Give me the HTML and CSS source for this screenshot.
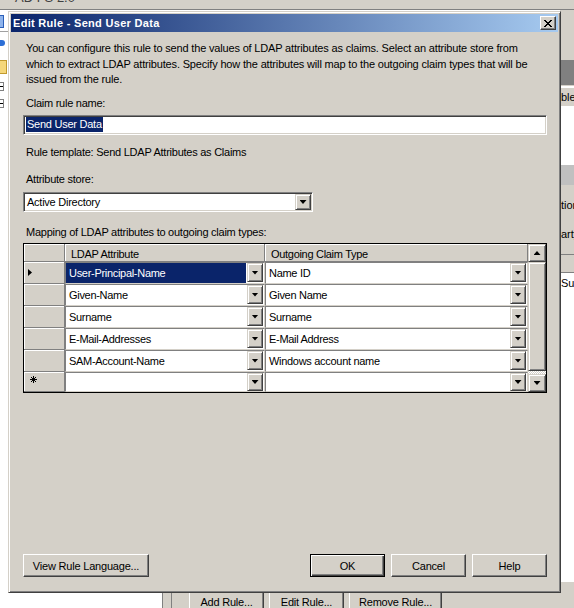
FILE: index.html
```html
<!DOCTYPE html>
<html lang="en">
<head>
    <meta charset="UTF-8">
    <title>Edit Rule - Send User Data</title>
    <link rel="stylesheet" href="styles.css">
</head>
<body>
<div class="screen">
    <!-- the management console behind the dialog -->
    <div class="backdrop">
        <div class="bg-top"><span class="bg-caption">AD FS 2.0</span></div>
        <div class="bg-main">
            <div class="bg-tree">
                <span class="ico-console"></span>
                <span class="tree-rule"></span>
                <span class="ico-pill"></span>
                <span class="ico-folder"></span>
                <span class="ico-node"></span>
                <span class="ico-node"></span>
            </div>
            <div class="bg-center"></div>
            <div class="bg-side">
                <div class="band band-face"></div>
                <div class="band band-dark"></div>
                <div class="band band-line"></div>
                <div class="band band-text">ble</div>
                <div class="band band-white"></div>
                <div class="band band-grey"></div>
                <div class="band band-text band-tall">tion</div>
                <div class="band band-text band-tall2">arty</div>
                <div class="band band-face band-gap"></div>
                <div class="band band-text band-su">Su.</div>
                <div class="band band-rest"></div>
            </div>
        </div>
        <div class="bg-bottom">
            <div class="bg-blank"></div>
            <div class="bg-sep"></div>
            <div class="bg-actions">
                <button class="btn bg-btn">Add Rule...</button>
                <button class="btn bg-btn">Edit Rule...</button>
                <button class="btn bg-btn bg-btn-wide">Remove Rule...</button>
            </div>
        </div>
    </div>

    <div class="dialog">
        <div class="titlebar">
            <span class="title">Edit Rule - Send User Data</span>
            <button class="close">
                <svg width="8" height="7" viewBox="0 0 8 7" shape-rendering="crispEdges"><path d="M0 0h2v1H0zM6 0h2v1H6zM1 1h2v1H1zM5 1h2v1H5zM2 2h4v1H2zM3 3h2v1H3zM2 4h4v1H2zM1 5h2v1H1zM5 5h2v1H5zM0 6h2v1H0zM6 6h2v1H6z"/></svg>
            </button>
        </div>
        <div class="body">
            <p class="intro">You can configure this rule to send the values of LDAP attributes as claims. Select an attribute store from<br>which to extract LDAP attributes. Specify how the attributes will map to the outgoing claim types that will be<br>issued from the rule.</p>

            <div class="label label-first">Claim rule name:</div>
            <div class="textbox"><span class="selection">Send User Data</span></div>

            <div class="label label-template">Rule template: Send LDAP Attributes as Claims</div>

            <div class="label label-store">Attribute store:</div>
            <div class="combo">
                <span class="combo-value">Active Directory</span>
                <span class="dropbtn"></span>
            </div>

            <div class="label label-map">Mapping of LDAP attributes to outgoing claim types:</div>
            <div class="grid">
                <div class="grid-body">
                    <div class="grid-head">
                        <div class="hcell hcell-corner"></div>
                        <div class="hcell col-ldap">LDAP Attribute</div>
                        <div class="hcell col-claim">Outgoing Claim Type</div>
                    </div>
                    <div class="grid-row">
                        <div class="rowhead"><span class="current"></span></div>
                        <div class="cell col-ldap"><span class="val selected">User-Principal-Name</span><span class="dropbtn"></span></div>
                        <div class="cell col-claim"><span class="val">Name ID</span><span class="dropbtn"></span></div>
                    </div>
                    <div class="grid-row">
                        <div class="rowhead"></div>
                        <div class="cell col-ldap"><span class="val">Given-Name</span><span class="dropbtn"></span></div>
                        <div class="cell col-claim"><span class="val">Given Name</span><span class="dropbtn"></span></div>
                    </div>
                    <div class="grid-row">
                        <div class="rowhead"></div>
                        <div class="cell col-ldap"><span class="val">Surname</span><span class="dropbtn"></span></div>
                        <div class="cell col-claim"><span class="val">Surname</span><span class="dropbtn"></span></div>
                    </div>
                    <div class="grid-row">
                        <div class="rowhead"></div>
                        <div class="cell col-ldap"><span class="val">E-Mail-Addresses</span><span class="dropbtn"></span></div>
                        <div class="cell col-claim"><span class="val">E-Mail Address</span><span class="dropbtn"></span></div>
                    </div>
                    <div class="grid-row">
                        <div class="rowhead"></div>
                        <div class="cell col-ldap"><span class="val">SAM-Account-Name</span><span class="dropbtn"></span></div>
                        <div class="cell col-claim"><span class="val">Windows account name</span><span class="dropbtn"></span></div>
                    </div>
                    <div class="grid-row grid-row-new">
                        <div class="rowhead">
                            <svg class="newrow" width="7" height="7" viewBox="0 0 7 7" shape-rendering="crispEdges"><path d="M3 0h1v7H3zM0 3h7v1H0zM1 1h1v1H1zM5 1h1v1H5zM1 5h1v1H1zM5 5h1v1H5zM2 2h1v1H2zM4 2h1v1H4zM2 4h1v1H2zM4 4h1v1H4z"/></svg>
                        </div>
                        <div class="cell col-ldap"><span class="val"></span><span class="dropbtn"></span></div>
                        <div class="cell col-claim"><span class="val"></span><span class="dropbtn"></span></div>
                    </div>
                </div>
                <div class="vscroll">
                    <span class="sbtn sbtn-up"></span>
                    <span class="thumb"></span>
                    <span class="track"></span>
                    <span class="sbtn sbtn-down"></span>
                </div>
            </div>

            <div class="buttons">
                <button class="btn btn-lang">View Rule Language...</button>
                <button class="btn btn-default">OK</button>
                <button class="btn">Cancel</button>
                <button class="btn">Help</button>
            </div>
        </div>
    </div>
</div>
</body>
</html>
```

FILE: styles.css
```css
body{
    margin:0;
    font-family:"Liberation Sans", Arial, sans-serif;
    font-size:11px;
    color:#000;
}
.screen{
    position:relative;
    width:574px;
    height:608px;
    overflow:hidden;
}

/* ---- console in the background ---- */
.backdrop{
    height:608px;
    display:flex;
    flex-direction:column;
    background:#fff;
}
.bg-top{
    height:9px;
    background:#d4d0c8;
    border-bottom:1px solid #808080;
    overflow:hidden;
}
.bg-caption{
    display:block;
    margin:-10px 0 0 15px;
    font-size:13px;
    color:#404040;
}
.bg-main{
    flex:1;
    display:flex;
}
.bg-tree{
    width:8px;
    display:flex;
    flex-direction:column;
    background:#fff;
}
.ico-console{
    width:3px;
    height:11px;
    margin-top:5px;
    border:1px solid #2b5fb8;
    border-left:0;
    background:#8fb4ec;
}
.tree-rule{
    height:1px;
    margin-top:3px;
    background:#a0a0a0;
}
.ico-pill{
    width:5px;
    height:6px;
    margin-top:8px;
    border-radius:0 3px 3px 0;
    background:#2d6fd6;
}
.ico-folder{
    width:6px;
    height:12px;
    margin-top:14px;
    background:#f5d77a;
    border:1px solid #c19a2e;
    border-left:0;
}
.ico-node{
    width:3px;
    height:7px;
    margin-top:8px;
    border:1px solid #808080;
    border-left:0;
    background:linear-gradient(#fff 3px,#000 3px,#000 4px,#fff 4px);
}
.bg-center{
    flex:1;
}
.bg-side{
    width:14px;
    display:flex;
    flex-direction:column;
    font-size:11px;
}
.band{
    padding-left:1px;
    overflow:hidden;
    white-space:nowrap;
}
.band-face{ height:50px; background:#d4d0c8; }
.band-dark{ height:25px; background:#808080; }
.band-line{ height:2px; background:#fff; border-top:1px solid #d4d0c8; }
.band-text{ height:18px; line-height:18px; background:#d4d0c8; }
.band-white{ height:59px; background:#fff; }
.band-grey{ height:20px; background:#c0c0c0; }
.band-tall{ height:37px; line-height:40px; }
.band-tall2{ height:32px; line-height:24px; border-bottom:1px solid #808080; }
.band-gap{ height:17px; border-bottom:1px solid #808080; }
.band-su{ height:19px; line-height:20px; background:#fff; }
.band-rest{ flex:1; background:#fff; }

.bg-bottom{
    height:26px;
    display:flex;
    background:#d4d0c8;
}
.bg-blank{
    width:162px;
    background:#fff;
}
.bg-sep{
    width:8px;
    border-left:1px solid #808080;
    border-right:1px solid #808080;
}
.bg-actions{
    display:flex;
    gap:5px;
    padding:8px 0 0 17px;
}
.bg-btn{
    width:75px;
}
.bg-btn-wide{
    width:93px;
}

/* ---- dialog window ---- */
.dialog{
    position:absolute;
    left:8px;
    top:11px;
    width:553px;
    height:582px;
    box-sizing:border-box;
    padding:2px;
    display:flex;
    flex-direction:column;
    background:#d4d0c8;
    border:1px solid;
    border-color:#d4d0c8 #404040 #404040 #d4d0c8;
    box-shadow:inset 1px 1px #fff, inset -1px -1px #808080;
}
.titlebar{
    height:18px;
    flex:none;
    display:flex;
    align-items:center;
    padding:0 2px;
    background:linear-gradient(to right,#0a246a,#a6caf0);
}
.title{
    color:#fff;
    font-weight:bold;
    font-size:11px;
    letter-spacing:0.3px;
}
.close{
    margin-left:auto;
    width:16px;
    height:14px;
    padding:0;
    display:flex;
    align-items:center;
    justify-content:center;
    background:#d4d0c8;
    border:1px solid;
    border-color:#fff #404040 #404040 #fff;
    box-shadow:inset -1px -1px #808080;
}
.body{
    flex:1;
    display:flex;
    flex-direction:column;
    padding:0 11px 13px 12px;
    letter-spacing:-0.25px;
}
.intro{
    margin:9px 0 0 3px;
    line-height:15.5px;
    letter-spacing:-0.17px;
}
.label{
    margin-left:3px;
    line-height:15px;
}
.label-first{ margin-top:8.5px; }
.label-template{ margin-top:10px; }
.label-store{ margin-top:12px; }
.label-map{ margin-top:13px; }

/* sunken fields */
.textbox,.combo{
    height:20px;
    box-sizing:border-box;
    background:#fff;
    border:1px solid;
    border-color:#808080 #fff #fff #808080;
    box-shadow:inset 1px 1px #404040, inset -1px -1px #d4d0c8;
}
.textbox{
    margin-top:4px;
    padding:1px 0 0 2px;
}
.selection{
    display:inline-block;
    line-height:15px;
    padding:0 1px;
    background:#0a246a;
    color:#fff;
}
.combo{
    width:290px;
    margin-top:5px;
    display:flex;
    align-items:center;
    padding:1px;
}
.combo-value{
    flex:1;
    padding-left:2px;
}
.dropbtn{
    width:16px;
    height:16px;
    flex:none;
    box-sizing:border-box;
    display:flex;
    align-items:center;
    justify-content:center;
    background:#d4d0c8;
    border:1px solid;
    border-color:#d4d0c8 #404040 #404040 #d4d0c8;
    box-shadow:inset 1px 1px #fff, inset -1px -1px #808080;
}
.dropbtn::after,.sbtn::after{
    content:"";
    width:7px;
    height:4px;
    background:#000;
    clip-path:polygon(0 0,100% 0,50% 100%);
}

/* data grid */
.grid{
    margin-top:3px;
    height:150px;
    box-sizing:border-box;
    display:flex;
    border:1px solid #000;
    background:#808080;
    letter-spacing:-0.3px;
}
.grid-body{
    width:504px;
    display:flex;
    flex-direction:column;
}
.grid-head,.grid-row{
    display:flex;
}
.grid-head{
    height:18px;
}
.hcell{
    box-sizing:border-box;
    padding-left:6px;
    line-height:20px;
    background:#d4d0c8;
    border-right:1px solid #808080;
    border-bottom:1px solid #808080;
    box-shadow:inset 1px 1px #fff;
}
.hcell-corner,.rowhead{
    width:41px;
}
.col-ldap{ width:200px; }
.col-claim{ width:263px; }
.grid-row{
    height:22px;
}
.grid-row-new{
    height:20px;
}
.rowhead{
    box-sizing:border-box;
    padding:7px 0 0 4px;
    background:#d4d0c8;
    border-right:1px solid #808080;
    border-bottom:1px solid #808080;
    box-shadow:inset 1px 1px #fff;
}
.grid-row-new .rowhead{
    padding:4px 0 0 6px;
}
.newrow{
    display:block;
}
.current{
    display:block;
    width:4px;
    height:7px;
    background:#000;
    clip-path:polygon(0 0,100% 50%,0 100%);
}
.cell{
    box-sizing:border-box;
    display:flex;
    align-items:flex-start;
    background:#fff;
    border-top:1px solid #808080;
    border-left:1px solid #808080;
    border-bottom:1px solid #d4d0c8;
    border-right:1px solid #d4d0c8;
}
.val{
    flex:1;
    align-self:stretch;
    padding:1px 0 0 3px;
    line-height:19px;
    margin-right:1px;
}
.val.selected{
    background:#0a246a;
    color:#fff;
}
.cell .dropbtn{
    height:19px;
    margin-right:1px;
}
.grid-row-new .cell .dropbtn{
    height:18px;
}
.vscroll{
    width:18px;
    display:flex;
    flex-direction:column;
    background:#d4d0c8;
}
.sbtn,.thumb{
    box-sizing:border-box;
    display:flex;
    align-items:center;
    justify-content:center;
    background:#d4d0c8;
    border:1px solid;
    border-color:#d4d0c8 #404040 #404040 #d4d0c8;
    box-shadow:inset 1px 1px #fff, inset -1px -1px #808080;
}
.sbtn{
    height:18px;
}
.sbtn-up::after{
    clip-path:polygon(50% 0,100% 100%,0 100%);
}
.thumb{
    height:109px;
}
.track{
    height:3px;
    background:repeating-conic-gradient(#fff 0 25%,#d4d0c8 0 50%) 0 0/2px 2px;
}

/* push buttons */
.btn{
    height:23px;
    padding:0;
    font-family:"Liberation Sans", Arial, sans-serif;
    font-size:11px;
    letter-spacing:-0.2px;
    color:#000;
    background:#d4d0c8;
    border:1px solid;
    border-color:#fff #404040 #404040 #fff;
    box-shadow:inset -1px -1px #808080;
}
.buttons{
    margin-top:auto;
    display:flex;
    gap:6px;
}
.buttons .btn{
    width:75px;
}
.buttons .btn-lang{
    width:126px;
    margin-right:auto;
}
.buttons .btn-default{
    border-color:#000;
    box-shadow:inset 1px 1px #fff, inset -1px -1px #404040, inset -2px -2px #808080;
}
```
